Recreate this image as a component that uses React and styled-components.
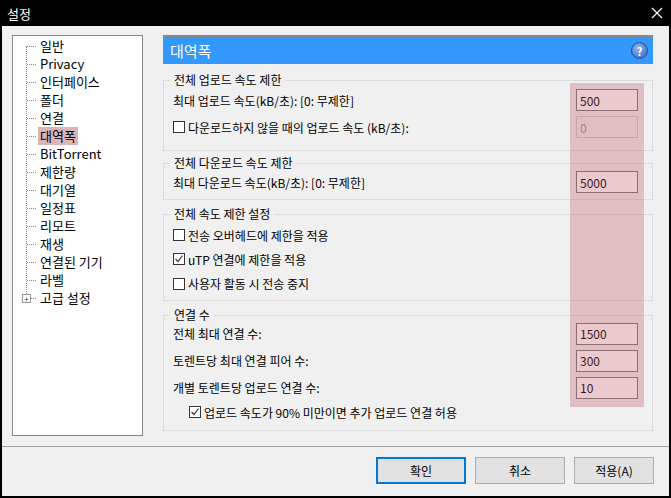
import React from "react";
import styled, { createGlobalStyle } from "styled-components";

const G = createGlobalStyle`
  html,body{margin:0;padding:0;background:#000;}
  body{font-family:"Noto Sans CJK KR","Noto Sans",sans-serif;font-size:12px;color:#000;}
`;
const Win = styled.div`width:671px;height:498px;box-sizing:border-box;background:#000;display:flex;flex-direction:column;padding:0 2px 2px 2px;`;
const Title = styled.div`height:26px;display:flex;align-items:center;justify-content:space-between;color:#fff;font-size:13px;padding:0 6px 0 5px;`;
const Body = styled.div`flex:1;background:#f0f0f0;display:flex;flex-direction:column;`;
const Main = styled.div`display:flex;padding:9px 0 0 10px;gap:20px;height:402px;position:relative;`;
const Tree = styled.div`width:131px;height:401px;background:#fff;border:1px solid #828790;box-sizing:border-box;position:relative;padding-top:1px;`;
const VLine = styled.div`position:absolute;left:13px;top:10px;height:252px;border-left:1px dotted #888;`;
const Item = styled.div`height:18px;display:flex;align-items:center;font-size:13px;padding-left:14px;position:relative;
  &::before{content:"";width:9px;border-top:1px dotted #888;margin-right:2px;}
  span{padding:0 2px;background:${p=>p.$sel?"#dcb4b8":"transparent"};line-height:18px;}`;
const Plus = styled.div`position:absolute;left:9px;top:5px;width:7px;height:7px;border:1px solid #999;background:#fff;font-size:8px;line-height:7px;text-align:center;color:#333;`;
const Right = styled.div`width:490px;display:flex;flex-direction:column;`;
const Header = styled.div`height:29px;background:#3399ff;border-top:2px solid #888;border-left:1px solid #888;box-sizing:border-box;display:flex;align-items:center;justify-content:space-between;padding:0 5px 0 6px;color:#fff;font-size:15px;`;
const Help = styled.div`width:15px;height:15px;border-radius:50%;background:radial-gradient(circle at 40% 35%,#8fb6f0,#2a62c0);color:#fff;font-size:11px;font-weight:bold;display:flex;align-items:center;justify-content:center;border:1px solid #1b4d9e;`;
const Group = styled.div`margin-top:${p=>p.$mt}px;height:${p=>p.$h}px;border:1px solid #dcdcdc;box-sizing:border-box;position:relative;padding:${p=>p.$pt||12}px 14px 0 9px;display:flex;flex-direction:column;`;
const Legend = styled.div`position:absolute;top:-9px;left:6px;background:#f0f0f0;padding:0 4px;font-size:12px;line-height:16px;`;
const Row = styled.div`height:${p=>p.$h||24}px;display:flex;align-items:center;justify-content:space-between;padding-left:${p=>p.$indent||0}px;`;
const Input = styled.div`width:62px;height:22px;box-sizing:border-box;border:1px solid ${p=>p.$dis?"#ccc":"#7a7a7a"};background:${p=>p.$dis?"#f0f0f0":"#fff"};color:${p=>p.$dis?"#999":"#000"};padding:0 3px;display:flex;align-items:center;font-size:12px;`;
const Check = styled.div`display:flex;align-items:center;gap:3px;`;
const Box = styled.div`width:12px;height:12px;border:1px solid #333;background:#fff;box-sizing:border-box;position:relative;display:flex;align-items:center;justify-content:center;`;
const Overlay = styled.div`position:absolute;left:568px;top:57px;width:74px;height:324px;background:rgba(190,80,95,0.3);pointer-events:none;`;
const Sep = styled.div`margin-top:9px;height:1px;background:#a0a0a0;`;
const Buttons = styled.div`display:flex;justify-content:flex-end;gap:9px;padding:10px 15px 0 0;`;
const Btn = styled.div`width:${p=>p.$w||90}px;height:27px;box-sizing:border-box;border:${p=>p.$def?"2px solid #0078d7":"1px solid #adadad"};background:#e1e1e1;display:flex;align-items:center;justify-content:center;font-size:12px;`;

const CB=({on,children})=>(<Check><Box>{on&&<svg width="10" height="10" viewBox="0 0 10 10"><path d="M1.5 5 L4 7.5 L8.5 1.5" stroke="#333" strokeWidth="1.2" fill="none"/></svg>}</Box><span>{children}</span></Check>);
const items=["일반","Privacy","인터페이스","폴더","연결","대역폭","BitTorrent","제한량","대기열","일정표","리모트","재생","연결된 기기","라벨"];

export default function App(){return(<><G/><Win>
<Title><span>설정</span><svg width="12" height="12" viewBox="0 0 12 12"><path d="M1 1L11 11M11 1L1 11" stroke="#fff" strokeWidth="1.2"/></svg></Title>
<Body><Main>
<Tree><VLine/>{items.map(t=><Item key={t} $sel={t==="대역폭"}><span>{t}</span></Item>)}
<Item><Plus>+</Plus><span>고급 설정</span></Item></Tree>
<Right>
<Header><span>대역폭</span><Help>?</Help></Header>
<Group $mt={16} $h={71} $pt={7}><Legend>전체 업로드 속도 제한</Legend>
<Row $h={24}><span>최대 업로드 속도(kB/초): [0: 무제한]</span><Input>500</Input></Row>
<Row $h={30}><CB>다운로드하지 않을 때의 업로드 속도 (kB/초):</CB><Input $dis>0</Input></Row></Group>
<Group $mt={12} $h={37} $pt={6}><Legend>전체 다운로드 속도 제한</Legend>
<Row><span>최대 다운로드 속도(kB/초): [0: 무제한]</span><Input>5000</Input></Row></Group>
<Group $mt={14} $h={87} $pt={8}><Legend>전체 속도 제한 설정</Legend>
<Row $h={24}><CB>전송 오버헤드에 제한을 적용</CB></Row>
<Row $h={24}><CB on>uTP 연결에 제한을 적용</CB></Row>
<Row $h={25}><CB>사용자 활동 시 전송 중지</CB></Row></Group>
<Group $mt={14} $h={116} $pt={4}><Legend>연결 수</Legend>
<Row $h={27}><span>전체 최대 연결 수:</span><Input>1500</Input></Row>
<Row $h={27}><span>토렌트당 최대 연결 피어 수:</span><Input>300</Input></Row>
<Row $h={27}><span>개별 토렌트당 업로드 연결 수:</span><Input>10</Input></Row>
<Row $h={22} $indent={16}><CB on>업로드 속도가 90% 미만이면 추가 업로드 연결 허용</CB></Row></Group>
</Right>
<Overlay/>
</Main>
<Sep/>
<Buttons><Btn $def>확인</Btn><Btn>취소</Btn><Btn $w={80}>적용(A)</Btn></Buttons>
</Body></Win></>);}
